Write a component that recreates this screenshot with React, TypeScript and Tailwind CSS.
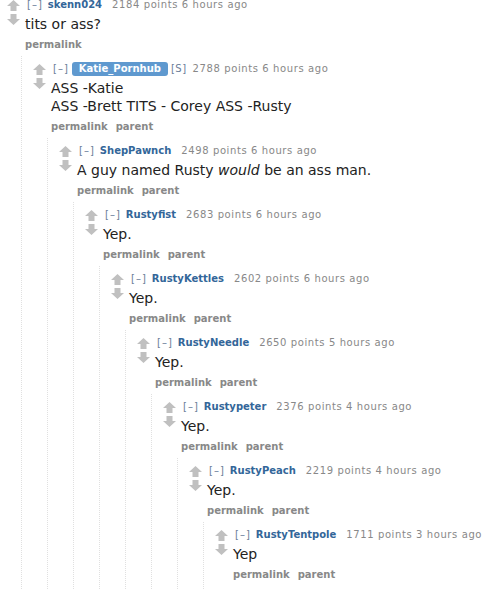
import type { ReactNode } from 'react';

interface CommentData {
  author: string;
  points: number;
  time: string;
  body: ReactNode;
  submitter?: boolean;
  parent?: boolean;
  child?: CommentData;
}

const thread: CommentData = {
  author: 'skenn024',
  points: 2184,
  time: '6 hours ago',
  body: 'tits or ass?',
  child: {
    author: 'Katie_Pornhub',
    points: 2788,
    time: '6 hours ago',
    submitter: true,
    parent: true,
    body: (
      <>
        <p>ASS -Katie</p>
        <p>ASS -Brett TITS - Corey ASS -Rusty</p>
      </>
    ),
    child: {
      author: 'ShepPawnch',
      points: 2498,
      time: '6 hours ago',
      parent: true,
      body: (
        <>
          A guy named Rusty <em>would</em> be an ass man.
        </>
      ),
      child: {
        author: 'Rustyfist',
        points: 2683,
        time: '6 hours ago',
        parent: true,
        body: 'Yep.',
        child: {
          author: 'RustyKettles',
          points: 2602,
          time: '6 hours ago',
          parent: true,
          body: 'Yep.',
          child: {
            author: 'RustyNeedle',
            points: 2650,
            time: '5 hours ago',
            parent: true,
            body: 'Yep.',
            child: {
              author: 'Rustypeter',
              points: 2376,
              time: '4 hours ago',
              parent: true,
              body: 'Yep.',
              child: {
                author: 'RustyPeach',
                points: 2219,
                time: '4 hours ago',
                parent: true,
                body: 'Yep.',
                child: {
                  author: 'RustyTentpole',
                  points: 1711,
                  time: '3 hours ago',
                  parent: true,
                  body: 'Yep',
                },
              },
            },
          },
        },
      },
    },
  },
};

function Arrow({ down }: { down?: boolean }) {
  return (
    <svg width="13" height="11" viewBox="0 0 13 11" className={down ? 'rotate-180' : ''}>
      <polygon points="6.5,0 13,6 9.5,6 9.5,11 3.5,11 3.5,6 0,6" fill="#c0c0c0" />
    </svg>
  );
}

function Comment({ c }: { c: CommentData }) {
  return (
    <div className={c.child ? '' : 'pb-[16px]'}>
      <div className="flex">
        <div className="ml-[7px] flex w-[13px] flex-col items-center gap-[3px] pt-[1px]">
          <Arrow />
          <Arrow down />
        </div>
        <div className="ml-[5px] flex-1">
          <p className="whitespace-nowrap text-[10px] leading-[12px] text-[#888]">
            <span className="ml-[2px] tracking-[1px] text-[#6a7d99]">[–]</span>
            {c.submitter ? (
              <span className="ml-[3px] rounded-[3px] bg-[#5f99cf] px-[7px] pb-[2px] pt-px font-bold text-white">
                {c.author}
              </span>
            ) : (
              <span className="ml-[5px] font-bold text-[#369]">{c.author}</span>
            )}
            {c.submitter ? (
              <span className="ml-[3px] tracking-[0.5px] text-[#6a7d99]">[S]</span>
            ) : null}
            <span className={`${c.submitter ? 'ml-[6px]' : 'ml-[10px]'} tracking-[0.6px]`}>
              {c.points} points {c.time}
            </span>
          </p>
          <div className="mt-[4px] text-[14px] leading-[18px] text-[#222]">{c.body}</div>
          <ul className="mt-[6px] flex gap-[8px] text-[10px] font-bold leading-[12px] text-[#888]">
            <li>permalink</li>
            {c.parent && <li>parent</li>}
          </ul>
        </div>
      </div>
      {c.child && (
        <div className="ml-[21px] mt-[5px] border-l border-dotted border-[#e0e0e0] pl-[4px] pt-[7px]">
          <Comment c={c.child} />
        </div>
      )}
    </div>
  );
}

export default function App() {
  return (
    <div className="h-[590px] overflow-hidden bg-white font-['DejaVu_Sans',Verdana,sans-serif]">
      <div className="-mt-px">
        <Comment c={thread} />
      </div>
    </div>
  );
}
